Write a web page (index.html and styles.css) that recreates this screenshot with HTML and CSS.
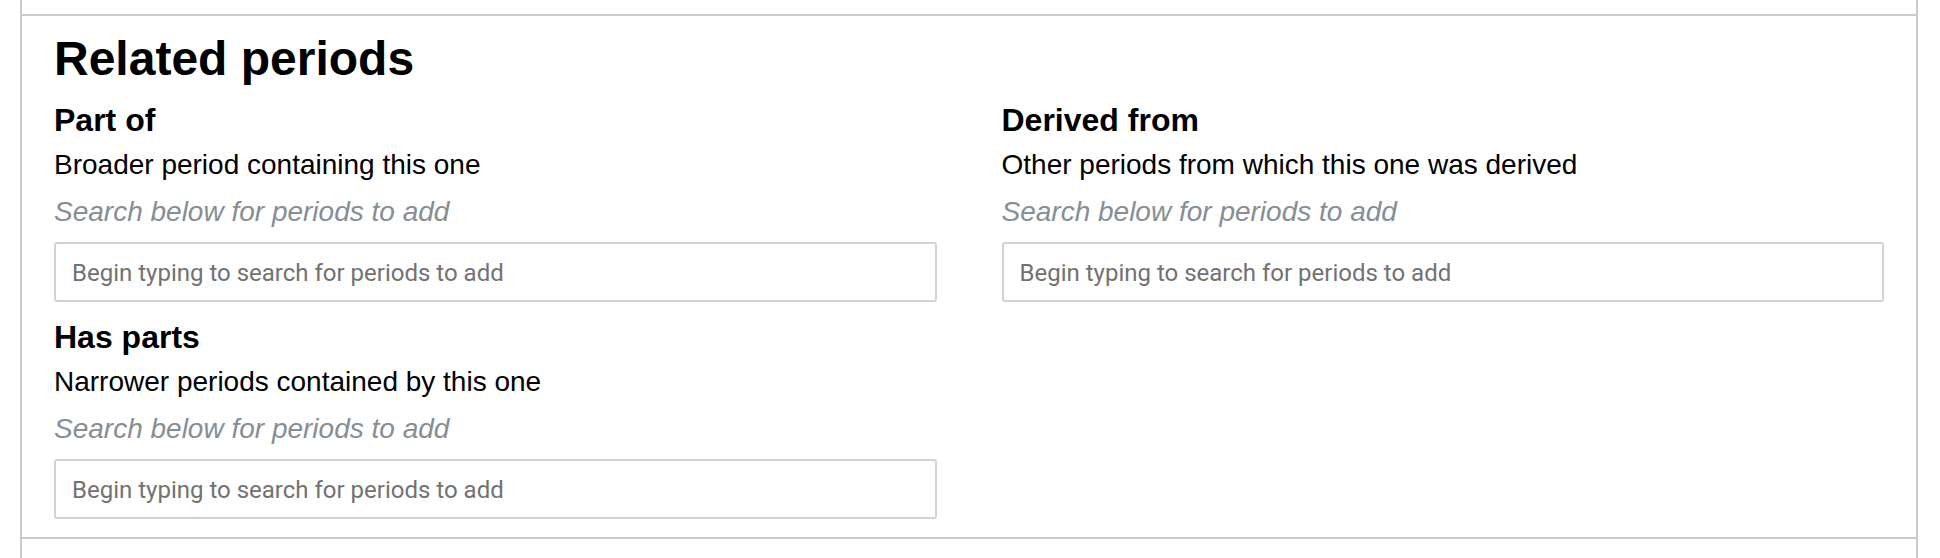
FILE: index.html
```html
<!DOCTYPE html>
<html lang="en">
<head>
<meta charset="utf-8">
<title>Related periods</title>
<link rel="stylesheet" href="styles.css">
</head>
<body>
<div class="frame">
  <section class="related">
    <h2 class="related-title">Related periods</h2>
    <div class="related-grid">
      <div class="field">
        <h4 class="field-title">Part of</h4>
        <p class="field-desc">Broader period containing this one</p>
        <p class="field-hint">Search below for periods to add</p>
        <input class="field-input" type="text" placeholder="Begin typing to search for periods to add">
      </div>
      <div class="field">
        <h4 class="field-title">Derived from</h4>
        <p class="field-desc">Other periods from which this one was derived</p>
        <p class="field-hint">Search below for periods to add</p>
        <input class="field-input" type="text" placeholder="Begin typing to search for periods to add">
      </div>
      <div class="field">
        <h4 class="field-title">Has parts</h4>
        <p class="field-desc">Narrower periods contained by this one</p>
        <p class="field-hint">Search below for periods to add</p>
        <input class="field-input" type="text" placeholder="Begin typing to search for periods to add">
      </div>
    </div>
  </section>
</div>
</body>
</html>
```
FILE: styles.css
```css
html, body {
  margin: 0;
  padding: 0;
  background: #ffffff;
}

body {
  font-family: "Liberation Sans", Arial, sans-serif;
  color: #000000;
  height: 558px;
  overflow: hidden;
}

.frame {
  margin: 0 22px 0 20px;
  border-left: 2px solid #cccccc;
  border-right: 2px solid #cccccc;
  padding-top: 14px;
  height: 544px;
}

.related {
  border-top: 2px solid #cccccc;
  border-bottom: 2px solid #cccccc;
  padding: 17px 32px 18px 32px;
}

.related-title {
  font-size: 48px;
  font-weight: bold;
  line-height: 1.1;
  margin: 0 0 17px 0;
}

.related-grid {
  display: grid;
  grid-template-columns: 1fr 1fr;
  column-gap: 65px;
  row-gap: 18px;
}

.field {
  display: flex;
  flex-direction: column;
}

.field-title {
  font-size: 32px;
  font-weight: bold;
  line-height: 1.1;
  margin: 0 0 6px 0;
}

.field-desc {
  font-size: 28px;
  line-height: 1.5;
  margin: 0 0 5px 0;
}

.field-hint {
  font-size: 28px;
  line-height: 1.5;
  font-style: italic;
  color: #868e96;
  margin: 0 0 9px 0;
}

.field-input {
  box-sizing: border-box;
  height: 60px;
  width: 100%;
  margin: 0;
  border: 2px solid #ced4da;
  border-radius: 3px;
  padding: 2px 16px 0 16px;
  font-family: Roboto, Inter, sans-serif;
  font-size: 24px;
  color: #495057;
  background: #ffffff;
  outline: none;
}

.field-input::placeholder {
  color: #727272;
  opacity: 1;
}
```
